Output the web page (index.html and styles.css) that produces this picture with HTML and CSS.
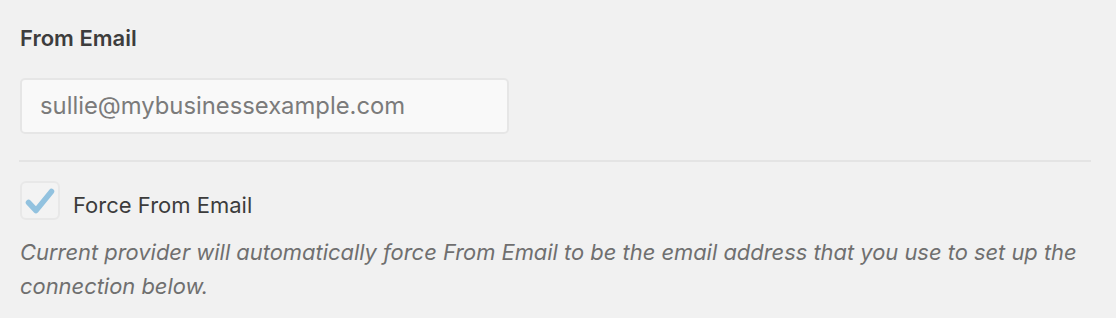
FILE: index.html
```html
<!DOCTYPE html>
<html>
<head>
<meta charset="utf-8">
<link rel="stylesheet" href="styles.css">
</head>
<body>
<div class="page">
  <div class="field">
    <label class="field-label" for="from-email">From Email</label>
    <div class="input-box" id="from-email">sullie@mybusinessexample.com</div>
  </div>
  <div class="separator"></div>
  <div class="field">
    <div class="check-row">
      <span class="checkbox">
        <svg viewBox="0 0 36 35" width="36" height="35" aria-hidden="true">
          <path d="M6.5 19.5 L14 27.5 L29.5 8.5" fill="none" stroke="#92c2df" stroke-width="5.5" stroke-linecap="round" stroke-linejoin="round"/>
        </svg>
      </span>
      <span class="check-label">Force From Email</span>
    </div>
    <p class="description">Current provider will automatically force From Email to be the email address that you use to set up the connection below.</p>
  </div>
</div>
</body>
</html>
```
FILE: styles.css
```css
html, body {
  margin: 0;
  padding: 0;
  background: #f1f1f1;
}
body {
  font-family: Inter, "Open Sans", "Liberation Sans", sans-serif;
  color: #3c3c3c;
}
.page {
  padding: 23px 25px 0 20px;
}
.field-label {
  display: block;
  font-size: 22px;
  font-weight: 600;
  line-height: 30px;
  color: #3d3d3d;
}
.input-box {
  margin-top: 25px;
  width: 467px;
  height: 52px;
  border: 2px solid #e6e6e6;
  border-radius: 5px;
  background: #f9f9f9;
  font-size: 23.8px;
  line-height: 52px;
  padding: 0 0 0 18px;
  color: #7b7b7b;
}
.separator {
  height: 2px;
  background: #e4e4e4;
  margin: 26px 0 19px -1px;
}
.check-row {
  display: flex;
  align-items: flex-start;
  gap: 13px;
}
.checkbox {
  display: block;
  width: 36px;
  height: 35px;
  border: 2px solid #e8e8e8;
  border-radius: 6px;
  background: #f3f3f3;
}
.checkbox svg {
  display: block;
}
.check-label {
  margin-top: 9px;
  font-size: 22px;
  line-height: 30px;
  color: #3c3c3c;
}
.description {
  margin: 15px 0 0;
  font-size: 21.9px;
  line-height: 34px;
  font-style: italic;
  color: #6f6f6f;
}
```
